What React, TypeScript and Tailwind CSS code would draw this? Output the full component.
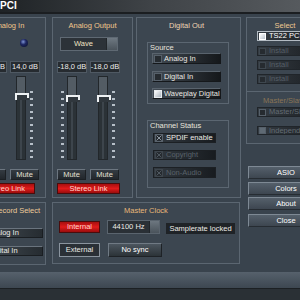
import React from 'react';

type Side = 'left' | 'right';

const panel = 'border border-[#5b6671] bg-[#3c4650]';
const muteBtn =
  'flex items-center justify-center border border-t-[#6c7680] border-l-[#6c7680] border-r-[#1c2024] border-b-[#1c2024] bg-linear-to-b from-[#343b42] to-[#22272c] text-[#e4e0d4]';
const redBtn =
  'flex items-center justify-center border border-[#4a0c0c] bg-linear-to-b from-[#a80f0f] via-[#e01b1b] to-[#9a0d0d] text-[#ffd4cc]';
const sideBtn =
  'flex h-[13px] w-[76px] items-center justify-center border border-t-[#7e8994] border-l-[#7e8994] border-r-[#262c32] border-b-[#262c32] bg-linear-to-b from-[#55606b] to-[#3d4650] text-white';

function Label({ children, className = '' }: { children: React.ReactNode; className?: string }) {
  return <div className={`h-[9px] leading-[9px] whitespace-nowrap ${className}`}>{children}</div>;
}

function Ticks() {
  return (
    <div className="mt-[15px] flex h-[67px] w-[3px] flex-col justify-between">
      {Array.from({ length: 11 }).map((_, i) => (
        <div key={i} className="h-[2px] bg-[#b6bfc8]" />
      ))}
    </div>
  );
}

function Fader({ side, pad, fill, knob }: { side: Side; pad: string; fill: string; knob: string }) {
  return (
    <div className={`flex h-[84px] ${pad} ${side === 'left' ? 'gap-[3px]' : 'gap-[4px]'}`}>
      {side === 'left' && <Ticks />}
      <div className="relative flex h-full w-[10px] justify-center border border-[#22272b] bg-[#2b3237]">
        <div className={`absolute inset-x-0 top-0 bg-[#535c64] ${fill}`} />
        <div className="h-full w-[2px] bg-[#3d454c]" />
        <div className={`absolute left-[-2px] h-[7px] w-[14px] border-t-2 border-l-2 border-[#eef1f3] bg-[#30373d] ${knob}`}>
          <div className="absolute top-0 right-0 h-[3px] w-[2px] bg-[#eef1f3]" />
        </div>
      </div>
      {side === 'right' && <Ticks />}
    </div>
  );
}

function Channel({ db, side, pad, fill, knob }: { db: string; side: Side; pad: string; fill: string; knob: string }) {
  return (
    <div className="flex w-[30px] flex-col">
      <div className="flex h-[12px] items-center justify-center border border-[#4f5963] bg-[#262b30] whitespace-nowrap text-[#ececec]">
        {db}
      </div>
      <div className="mt-[3px]">
        <Fader side={side} pad={pad} fill={fill} knob={knob} />
      </div>
      <div className={`mt-[9px] h-[11px] w-[29px] ${muteBtn}`}>Mute</div>
    </div>
  );
}

function Box({ on, dim }: { on?: boolean; dim?: boolean }) {
  return (
    <div
      className={`h-[8px] w-[8px] shrink-0 border ${
        on
          ? 'border-[#e8ecef] bg-linear-to-br from-[#ffffff] to-[#aab4bd]'
          : dim
            ? 'border-[#3c444b] bg-[#2a3035]'
            : 'border-[#56606a] bg-[#262b30]'
      }`}
    />
  );
}

function XBox({ dim }: { dim?: boolean }) {
  return (
    <div className={`flex h-[8px] w-[8px] shrink-0 items-center justify-center border ${dim ? 'border-[#3e464d]' : 'border-[#5a646e]'} bg-[#262b30]`}>
      <svg width="6" height="6" viewBox="0 0 6 6">
        <path d="M0.5 0.5L5.5 5.5M5.5 0.5L0.5 5.5" stroke={dim ? '#4e575f' : '#8d97a0'} strokeWidth="1" />
      </svg>
    </div>
  );
}

function RadioRow({ label, on, className = '' }: { label: string; on?: boolean; className?: string }) {
  return (
    <div
      className={`flex items-center gap-[2px] overflow-hidden border border-t-[#59636d] border-l-[#59636d] border-r-[#15181b] border-b-[#15181b] bg-linear-to-r from-[#434c55] to-[#15181b] pl-[1px] whitespace-nowrap text-[#e8e6e0] ${className}`}
    >
      <Box on={on} />
      <span>{label}</span>
    </div>
  );
}

function StatusRow({ label, dim, className = '' }: { label: string; dim?: boolean; className?: string }) {
  return (
    <div
      className={`flex items-center gap-[3px] overflow-hidden border border-[#1c2024] bg-linear-to-r from-[#333a41] to-[#181c20] pl-[1px] whitespace-nowrap ${
        dim ? 'text-[#59626a]' : 'text-[#eceae4]'
      } ${className}`}
    >
      <XBox dim={dim} />
      <span>{label}</span>
    </div>
  );
}

function SelectRow({ label, on, dim, lit, className = '' }: { label: string; on?: boolean; dim?: boolean; lit?: boolean; className?: string }) {
  return (
    <div
      className={`ml-[10px] flex w-[62px] items-center gap-[3px] overflow-hidden border pl-[1px] whitespace-nowrap ${
        on ? 'border-[#b3bbc3] text-white' : 'border-[#20252a] text-[#565f67]'
      } bg-linear-to-r from-[#353c43] to-[#1c2024] ${className}`}
    >
      <div
        className={`h-[7px] w-[7px] shrink-0 border ${
          on
            ? 'border-white bg-linear-to-br from-white to-[#b8c1c9]'
            : lit
              ? 'border-[#56606a] bg-[#5f6a74]'
              : dim
                ? 'border-[#3e474f] bg-[#262b30]'
                : 'border-[#56606a] bg-[#262b30]'
        }`}
      />
      <span>{label}</span>
    </div>
  );
}

function Knob() {
  return (
    <div className="h-[8px] w-[8px] rounded-full bg-[radial-gradient(circle_at_40%_35%,#7d93d4_0%,#1e2761_40%,#0b0f24_100%)]" />
  );
}

export default function App() {
  return (
    <div className="flex h-[300px] w-[300px] flex-col overflow-hidden bg-[#39434d] font-['Liberation_Sans',Arial,sans-serif] text-[7.5px] leading-none">
      {/* title bar */}
      <div className="flex h-[12px] shrink-0 items-center bg-linear-to-r from-[#1f2326] via-[#3f4347] to-[#565a5e] text-[10px] font-bold text-white">
        <span>PCI</span>
      </div>
      <div className="h-[2px] shrink-0 bg-[#1b1e21]" />

      <div className="mt-[3px] flex h-[248px] shrink-0">
        {/* left block */}
        <div className="flex w-[241px] shrink-0 flex-col">
          <div className="flex h-[181px] shrink-0">
            {/* Analog In */}
            <div className={`-ml-[29px] flex h-full w-[75px] shrink-0 flex-col px-[5px] ${panel}`}>
              <Label className="mt-[3px] text-center text-[#f2c68c]">Analog In</Label>
              <div className="mt-[9px] flex gap-[3px]">
                <div className="flex w-[30px] justify-center">
                  <Knob />
                </div>
                <div className="flex w-[30px] justify-center pr-[3px]">
                  <Knob />
                </div>
              </div>
              <div className="mt-[14px] flex gap-[3px]">
                <Channel db="14,0 dB" side="left" pad="pl-[4px]" fill="h-[17px]" knob="top-[16px]" />
                <Channel db="14,0 dB" side="right" pad="pl-[6px]" fill="h-[17px]" knob="top-[16px]" />
              </div>
              <div className={`mt-[3px] h-[11px] w-[58px] ${redBtn}`}>Stereo Link</div>
            </div>

            {/* Analog Output */}
            <div className={`ml-[6px] flex h-full w-[81px] shrink-0 flex-col pl-[4px] ${panel}`}>
              <Label className="mt-[3px] pr-[4px] text-center text-[#f2c68c]">Analog Output</Label>
              <div className="mt-[7px] ml-[3px] flex h-[14px] w-[58px] border border-[#5f6973] bg-[#2c3238]">
                <div className="flex flex-1 items-center justify-center text-[#f0e2c4]">Wave</div>
                <div className="w-[11px] border-l border-[#22272b] bg-linear-to-b from-[#6f7982] to-[#4b545c]" />
              </div>
              <div className="mt-[10px] flex gap-[3px]">
                <Channel db="-18,0 dB" side="left" pad="pl-[4px]" fill="h-[19px]" knob="top-[18px]" />
                <Channel db="-18,0 dB" side="right" pad="pl-[8px]" fill="h-[19px]" knob="top-[18px]" />
              </div>
              <div className={`mt-[3px] h-[11px] w-[63px] ${redBtn}`}>Stereo Link</div>
            </div>

            {/* Digital Out */}
            <div className={`ml-[3px] flex h-full w-[105px] shrink-0 flex-col ${panel}`}>
              <Label className="mt-[3px] pr-[4px] text-center text-[#efd5b5]">Digital Out</Label>
              <div className="mt-[12px] ml-[10px] flex h-[62px] w-[82px] flex-col border border-[#5b6671]">
                <div className="mt-[1px] h-[8px] pl-[2px] text-[#e8e4dc]">Source</div>
                <RadioRow label="Analog In" className="mt-[1px] ml-[4px] h-[11px] w-[69px]" />
                <RadioRow label="Digital In" className="mt-[7px] ml-[4px] h-[11px] w-[69px]" />
                <RadioRow label="Waveplay Digital" on className="mt-[6px] ml-[4px] h-[11px] w-[69px]" />
              </div>
              <div className="mt-[16px] ml-[10px] flex h-[68px] w-[82px] flex-col border border-[#5b6671]">
                <div className="mt-[1px] h-[8px] pl-[2px] whitespace-nowrap text-[#e8e4dc]">Channel Status</div>
                <StatusRow label="SPDIF enable" className="mt-[3px] ml-[5px] h-[10px] w-[63px]" />
                <StatusRow label="Copyright" dim className="mt-[7px] ml-[5px] h-[10px] w-[63px]" />
                <StatusRow label="Non-Audio" dim className="mt-[7px] ml-[5px] h-[11px] w-[63px]" />
              </div>
            </div>
          </div>

          <div className="mt-[4px] flex h-[63px] shrink-0">
            {/* Record Select */}
            <div className={`-ml-[40px] flex h-full w-[86px] shrink-0 flex-col ${panel}`}>
              <Label className="mt-[3px] pr-[5px] text-right text-[#eecb98]">Record Select</Label>
              <div className="mt-[13px] ml-[2px] flex h-[10px] w-[80px] items-center justify-center border border-t-[#6a747e] border-l-[#6a747e] border-r-[#1a1e22] border-b-[#1a1e22] bg-linear-to-r from-[#4d5760] to-[#262c31] text-[#ecebe6]">
                Analog In
              </div>
              <div className="mt-[8px] ml-[2px] flex h-[10px] w-[80px] items-center justify-center border border-t-[#6a747e] border-l-[#6a747e] border-r-[#1a1e22] border-b-[#1a1e22] bg-linear-to-r from-[#4d5760] to-[#262c31] text-[#ecebe6]">
                Digital In
              </div>
            </div>

            {/* Master Clock */}
            <div className={`ml-[6px] flex h-[62px] w-[188px] shrink-0 flex-col ${panel}`}>
              <Label className="mt-[3px] text-center text-[#e8b878]">Master Clock</Label>
              <div className="mt-[5px] flex h-[14px] items-center pl-[6px]">
                <div className={`h-[12px] w-[41px] ${redBtn}`}>Internal</div>
                <div className="ml-[7px] flex h-[14px] w-[53px] border border-[#5a646e] bg-[#2a3036]">
                  <div className="flex flex-1 items-center justify-center text-[#ecebe6]">44100 Hz</div>
                  <div className="w-[10px] border-l border-[#20252a] bg-linear-to-b from-[#6d7780] to-[#4a535b]" />
                </div>
                <div className="ml-[6px] flex h-[11px] w-[69px] items-center justify-center self-end bg-[#1f2327] whitespace-nowrap text-[#ecebe6]">
                  Samplerate locked
                </div>
              </div>
              <div className="mt-[9px] flex h-[14px] items-center pl-[6px]">
                <div className="flex h-[14px] w-[41px] items-center justify-center border border-[#8a949e] bg-[#2a3036] text-[#ecebe6]">
                  External
                </div>
                <div className="ml-[8px] flex h-[14px] w-[54px] items-center justify-center border border-t-[#707a84] border-l-[#707a84] border-r-[#1e2226] border-b-[#1e2226] bg-linear-to-b from-[#4c565f] to-[#2c3338] text-white">
                  No sync
                </div>
              </div>
            </div>
          </div>
        </div>

        {/* right column */}
        <div className="ml-[5px] flex w-[78px] shrink-0 flex-col">
          <div className={`flex h-[127px] flex-col ${panel}`}>
            <Label className="mt-[3px] text-center text-[#f0c890]">Select</Label>
            <SelectRow label="TS22 PCI" on className="mt-[1px] h-[10px]" />
            <SelectRow label="Install" dim className="mt-[5px] h-[10px]" />
            <SelectRow label="Install" dim className="mt-[4px] h-[10px]" />
            <SelectRow label="Install" dim className="mt-[4px] h-[10px]" />
            <div className="mt-[7px] h-px bg-[#5b6671]" />
            <Label className="mt-[4px] h-[8px] text-center text-[#8a7556]">Master/Slave</Label>
            <SelectRow label="Master/Slave" className="mt-[2px] h-[10px] text-[#636c74]" />
            <SelectRow label="Independent" lit className="mt-[9px] h-[9px] text-[#636c74]" />
          </div>
          <div className={`mt-[22px] ml-[2px] ${sideBtn}`}>ASIO</div>
          <div className={`mt-[3px] ml-[2px] ${sideBtn}`}>Colors</div>
          <div className={`mt-[2px] ml-[2px] ${sideBtn}`}>About</div>
          <div className={`mt-[4px] ml-[2px] ${sideBtn}`}>Close</div>
        </div>
      </div>

      {/* status band */}
      <div className="mt-[7px] h-[16px] shrink-0 bg-linear-to-b from-[#56616c] to-[#3d4751]" />
      <div className="flex-1 border-t border-[#1c2023] bg-[#2a3035]" />
    </div>
  );
}
